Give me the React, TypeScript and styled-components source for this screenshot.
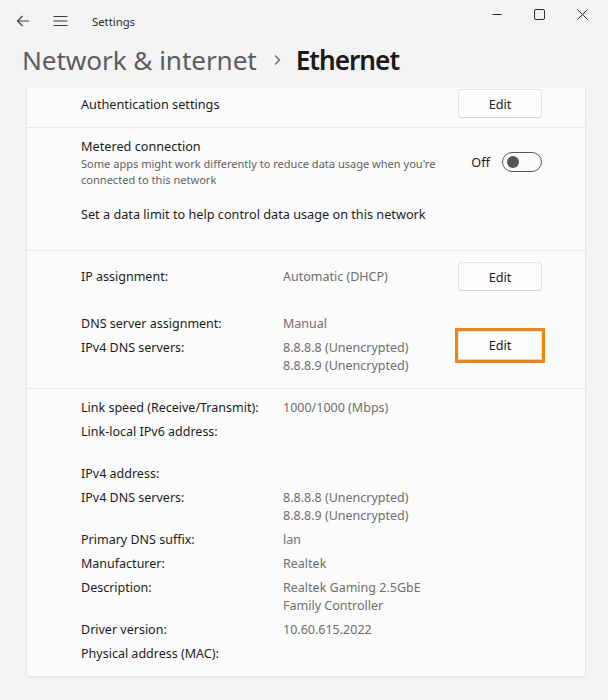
import styled, { createGlobalStyle } from "styled-components";

const GlobalStyle = createGlobalStyle`
    html, body {
        margin: 0;
        padding: 0;
        background: #f3f3f3;
    }
    body {
        font-family: "Noto Sans", "Open Sans", sans-serif;
        color: #1b1b1b;
        -webkit-font-smoothing: antialiased;
    }
`;

const Window = styled.div`
    width: 608px;
    height: 700px;
    overflow: hidden;
    background: #f3f3f3;
    display: flex;
    flex-direction: column;
`;

const TitleBar = styled.div`
    height: 42px;
    display: flex;
    align-items: center;
    padding-left: 14px;
`;

const IconButton = styled.div`
    width: 18px;
    height: 18px;
    display: flex;
    align-items: center;
    justify-content: center;
    margin-right: 19px;
    color: #3a3a3a;
`;

const AppName = styled.span`
    font-size: 11.3px;
    color: #2b2b2b;
    margin-left: 4px;
`;

const WindowControls = styled.div`
    margin-left: auto;
    margin-right: 4px;
    display: flex;
    align-self: flex-start;
    height: 28px;
`;

const ControlButton = styled.div`
    width: 43px;
    height: 28px;
    display: flex;
    align-items: center;
    justify-content: center;
    color: #2a2a2a;
`;

const Heading = styled.h1`
    margin: 0;
    padding: 0 0 11px 22px;
    height: 35px;
    display: flex;
    align-items: center;
    font-size: 26.2px;
    font-weight: 400;
    color: #5c5c5c;
`;

const Crumb = styled.span<{ $current?: boolean }>`
    color: ${(p) => (p.$current ? "#1a1a1a" : "#5c5c5c")};
    font-weight: ${(p) => (p.$current ? 600 : 400)};
    letter-spacing: ${(p) => (p.$current ? "-1px" : "-0.1px")};
`;

const Chevron = styled.span`
    display: inline-flex;
    margin: 0 15px 0 16px;
    color: #6a6a6a;
`;

const Card = styled.div`
    margin: 0 22px 0 26px;
    background: #fbfbfb;
    border: 1px solid #e6e6e6;
    border-top: none;
    border-radius: 0 0 5px 5px;
    box-shadow: 0 1px 2px rgba(0, 0, 0, 0.04);
`;

const Section = styled.div<{ $pt: number; $pb: number }>`
    padding: ${(p) => p.$pt}px 43px ${(p) => p.$pb}px 54px;
    border-top: 1px solid #eaeaea;
    display: flex;
    flex-direction: column;
    &:first-child {
        border-top: none;
    }
`;

const SettingRow = styled.div`
    display: flex;
    align-items: center;
    justify-content: space-between;
`;

const Title = styled.div`
    font-size: 12.7px;
    line-height: 20px;
    color: #1b1b1b;
`;

const SubText = styled.div`
    font-size: 11.05px;
    line-height: 16px;
    color: #5f5f5f;
    max-width: 370px;
`;

const PlainText = styled.div`
    font-size: 12.7px;
    line-height: 20px;
    color: #1b1b1b;
    margin-top: 16px;
`;

const EditButton = styled.button<{ $focused?: boolean }>`
    width: 84px;
    height: 29px;
    border: 1px solid #e3e3e3;
    border-bottom-color: #d2d2d2;
    border-radius: ${(p) => (p.$focused ? "0" : "4px")};
    background: #fefefe;
    font-family: inherit;
    font-size: 12.7px;
    color: #1b1b1b;
    padding: 0;
    flex-shrink: 0;
    outline: ${(p) => (p.$focused ? "3px solid #f7830f" : "none")};
    outline-offset: 0px;
`;

const ToggleGroup = styled.div`
    display: flex;
    align-items: center;
    gap: 12px;
    font-size: 12.7px;
`;

const Toggle = styled.div`
    width: 34px;
    height: 18px;
    border: 1px solid #5a5a5a;
    border-radius: 10px;
    display: flex;
    align-items: center;
    padding-left: 4px;
`;

const Knob = styled.div`
    width: 12px;
    height: 12px;
    border-radius: 50%;
    background: #555555;
`;

const Block = styled.div<{ $mt?: number }>`
    display: flex;
    align-items: center;
    justify-content: space-between;
    margin-top: ${(p) => p.$mt ?? 0}px;
`;

const InfoGrid = styled.div`
    display: grid;
    grid-template-columns: 202px 1fr;
    row-gap: 6px;
    font-size: 12.5px;
    line-height: 18px;
`;

const Label = styled.div`
    color: #1b1b1b;
`;

const Value = styled.div`
    color: #6e6e6e;
    min-height: 18px;
`;

const ValueLine = styled.div`
    min-height: 18px;
`;

type Info = [string, string[]];

const dnsInfo: Info[] = [
    ["DNS server assignment:", ["Manual"]],
    ["IPv4 DNS servers:", ["8.8.8.8 (Unencrypted)", "8.8.8.9 (Unencrypted)"]],
];

const details: Info[] = [
    ["Link speed (Receive/Transmit):", ["1000/1000 (Mbps)"]],
    ["Link-local IPv6 address:", ["", ""]],
    ["IPv4 address:", [""]],
    ["IPv4 DNS servers:", ["8.8.8.8 (Unencrypted)", "8.8.8.9 (Unencrypted)"]],
    ["Primary DNS suffix:", ["lan"]],
    ["Manufacturer:", ["Realtek"]],
    ["Description:", ["Realtek Gaming 2.5GbE", "Family Controller"]],
    ["Driver version:", ["10.60.615.2022"]],
    ["Physical address (MAC):", [""]],
];

function InfoRows({ rows }: { rows: Info[] }) {
    return (
        <InfoGrid>
            {rows.flatMap(([label, lines]) => [
                <Label key={label + "-l"}>{label}</Label>,
                <Value key={label + "-v"}>
                    {lines.map((line, i) => (
                        <ValueLine key={i}>{line}</ValueLine>
                    ))}
                </Value>,
            ])}
        </InfoGrid>
    );
}

export default function App() {
    return (
        <Window>
            <GlobalStyle />
            <TitleBar>
                <IconButton>
                    <svg width="14" height="12" viewBox="0 0 14 12" fill="none" stroke="currentColor" strokeWidth="1.1">
                        <path d="M13 6H1.5M6.5 1L1.5 6l5 5" />
                    </svg>
                </IconButton>
                <IconButton>
                    <svg width="15" height="12" viewBox="0 0 15 12" fill="none" stroke="currentColor" strokeWidth="1.1">
                        <path d="M0.5 1.5h14M0.5 6h14M0.5 10.5h14" />
                    </svg>
                </IconButton>
                <AppName>Settings</AppName>
                <WindowControls>
                    <ControlButton>
                        <svg width="10" height="10" viewBox="0 0 10 10" stroke="currentColor" strokeWidth="1">
                            <path d="M0.5 5.5h9" />
                        </svg>
                    </ControlButton>
                    <ControlButton>
                        <svg width="11" height="11" viewBox="0 0 11 11" fill="none" stroke="currentColor" strokeWidth="1">
                            <rect x="0.5" y="0.5" width="10" height="10" rx="1.5" />
                        </svg>
                    </ControlButton>
                    <ControlButton>
                        <svg width="11" height="11" viewBox="0 0 11 11" fill="none" stroke="currentColor" strokeWidth="1">
                            <path d="M0.5 0.5l10 10M10.5 0.5l-10 10" />
                        </svg>
                    </ControlButton>
                </WindowControls>
            </TitleBar>

            <Heading>
                <Crumb>Network &amp; internet</Crumb>
                <Chevron>
                    <svg width="8" height="12" viewBox="0 0 8 12" fill="none" stroke="currentColor" strokeWidth="1.4">
                        <path d="M2 1.5L6.5 6 2 10.5" />
                    </svg>
                </Chevron>
                <Crumb $current>Ethernet</Crumb>
            </Heading>

            <Card>
                <Section $pt={1} $pb={9}>
                    <SettingRow>
                        <Title>Authentication settings</Title>
                        <EditButton>Edit</EditButton>
                    </SettingRow>
                </Section>

                <Section $pt={8} $pb={26}>
                    <SettingRow>
                        <div>
                            <Title>Metered connection</Title>
                            <SubText>Some apps might work differently to reduce data usage when you're connected to this network</SubText>
                        </div>
                        <ToggleGroup>
                            <span>Off</span>
                            <Toggle>
                                <Knob />
                            </Toggle>
                        </ToggleGroup>
                    </SettingRow>
                    <PlainText>Set a data limit to help control data usage on this network</PlainText>
                </Section>

                <Section $pt={11} $pb={13}>
                    <Block>
                        <InfoRows rows={[["IP assignment:", ["Automatic (DHCP)"]]]} />
                        <EditButton>Edit</EditButton>
                    </Block>
                    <Block $mt={24}>
                        <InfoRows rows={dnsInfo} />
                        <EditButton $focused>Edit</EditButton>
                    </Block>
                </Section>

                <Section $pt={10} $pb={13}>
                    <InfoRows rows={details} />
                </Section>
            </Card>
        </Window>
    );
}
